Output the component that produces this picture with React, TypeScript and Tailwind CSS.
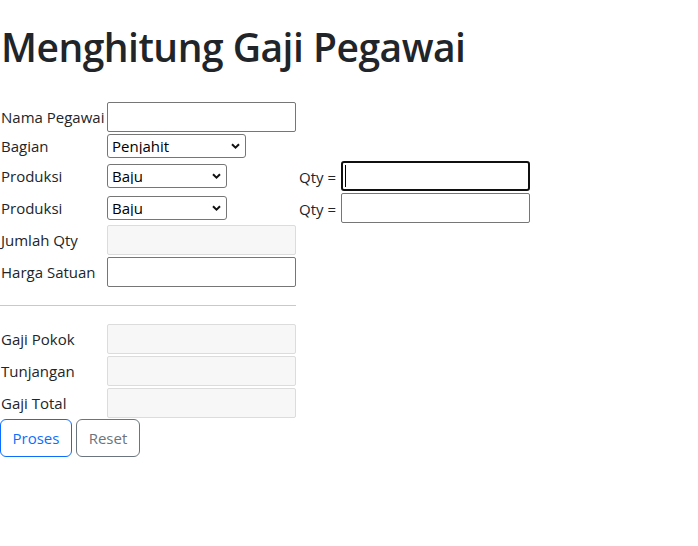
import React from "react";

const font = { fontFamily: '"Open Sans", "Noto Sans", Arial, sans-serif' };

function Chevron() {
  return (
    <svg
      className="pointer-events-none absolute right-[6px] top-1/2 -translate-y-1/2"
      width="9"
      height="6"
      viewBox="0 0 9 6"
    >
      <path d="M1 1.2 L4.5 4.6 L8 1.2" fill="none" stroke="#111" strokeWidth="2" />
    </svg>
  );
}

function Select({ value, w }: { value: string; w: string }) {
  return (
    <div className={`relative ${w} h-[24px]`}>
      <select
        defaultValue={value}
        className="appearance-none w-full h-full border border-[#767676] rounded-[3px] bg-white pl-[4px] pt-[1px] text-[15px] leading-none text-black outline-none"
      >
        <option>{value}</option>
      </select>
      <Chevron />
    </div>
  );
}

function TextInput({ disabled }: { disabled?: boolean }) {
  return (
    <input
      type="text"
      disabled={disabled}
      className={
        disabled
          ? "w-[189px] h-[30px] border border-[#dcdcdc] rounded-[2px] bg-[#f7f7f7] outline-none"
          : "w-[189px] h-[30px] border border-[#767676] rounded-[2px] bg-white outline-none"
      }
    />
  );
}

function Row({ label, mt, h = "h-[30px]", children }: { label: string; mt: string; h?: string; children: React.ReactNode }) {
  return (
    <div className={`flex items-center ${h} ${mt}`}>
      <div className="w-[107px] pl-[1px] shrink-0 whitespace-nowrap">{label}</div>
      {children}
    </div>
  );
}

export default function App() {
  return (
    <div className="min-h-[546px] bg-white text-[#212529] text-[15px]" style={font}>
      <h1 className="pt-[24px] pl-[1px] h-[72px] text-[39px] font-semibold leading-[1.2] tracking-[-0.5px]">
        Menghitung Gaji Pegawai
      </h1>

      <div className="mt-[30px]">
        <Row label="Nama Pegawai" mt="mt-0">
          <TextInput />
        </Row>
        <Row label="Bagian" mt="mt-[2px]" h="h-[24px]">
          <Select value="Penjahit" w="w-[139px]" />
        </Row>
        <Row label="Produksi" mt="mt-[3px]">
          <div className="w-[192px] shrink-0">
            <Select value="Baju" w="w-[120px]" />
          </div>
          <span className="mr-[5px] mt-[2px]">Qty =</span>
          <div className="relative">
            <input
              type="text"
              className="w-[189px] h-[30px] border-2 border-[#101010] rounded-[3px] bg-white outline-none"
            />
            <span className="absolute left-[4px] top-[4px] h-[22px] w-[1px] bg-black" />
          </div>
        </Row>
        <Row label="Produksi" mt="mt-[2px]">
          <div className="w-[192px] shrink-0">
            <Select value="Baju" w="w-[120px]" />
          </div>
          <span className="mr-[5px] mt-[2px]">Qty =</span>
          <input
            type="text"
            className="w-[189px] h-[30px] border border-[#767676] rounded-[2px] bg-white outline-none"
          />
        </Row>
        <Row label="Jumlah Qty" mt="mt-[2px]">
          <TextInput disabled />
        </Row>
        <Row label="Harga Satuan" mt="mt-[2px]">
          <TextInput />
        </Row>

        <hr className="w-[296px] mt-[18px] mb-[18px] border-0 border-t border-[#c8c9ca]" />

        <Row label="Gaji Pokok" mt="mt-0">
          <TextInput disabled />
        </Row>
        <Row label="Tunjangan" mt="mt-[2px]">
          <TextInput disabled />
        </Row>
        <Row label="Gaji Total" mt="mt-[2px]">
          <TextInput disabled />
        </Row>

        <div className="flex gap-[4px] mt-[1px]">
          <button className="h-[38px] w-[72px] border border-[#0d6efd] text-[#0d6efd] rounded-[6px] text-[15px] bg-white">
            Proses
          </button>
          <button className="h-[38px] w-[64px] border border-[#6c757d] text-[#6c757d] rounded-[6px] text-[15px] bg-white">
            Reset
          </button>
        </div>
      </div>
    </div>
  );
}
